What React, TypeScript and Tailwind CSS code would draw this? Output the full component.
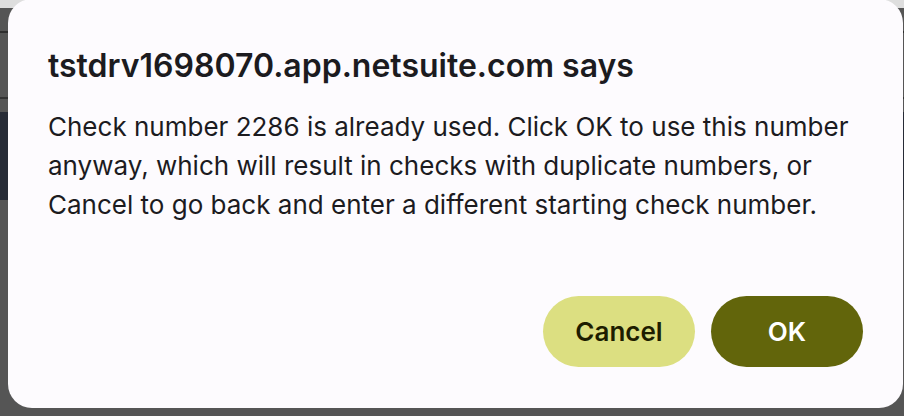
import React from "react";

export default function App() {
  return (
    <div className="relative w-[904px] h-[416px] overflow-hidden bg-[#555555] font-['Inter','Liberation_Sans',sans-serif]">
      {/* page behind the alert */}
      <div className="flex flex-col">
        <div className="h-[8px] bg-[#dedede]" />
        <div className="h-[23px]" />
        <div className="h-[2px] bg-[#2e2e2e]" />
        <div className="h-[64px]" />
        <div className="h-[2px] bg-[#333333]" />
        <div className="h-[13px]" />
        <div className="h-[88px] bg-[#272b36]" />
      </div>

      {/* alert dialog */}
      <div className="absolute left-[8px] top-[-1px] w-[895px] h-[409px] rounded-[24px] bg-[#fdfbfe] flex flex-col px-[40px] pb-[41px] pt-[47px] text-[#1c1b1f]">
        <h1 className="text-[32px] leading-[40px] font-semibold">
          tstdrv1698070.app.netsuite.com says
        </h1>
        <p className="mt-[21px] text-[26px] leading-[39px]">
          Check number 2286 is already used. Click OK to use this number anyway, which will result in checks with duplicate numbers, or Cancel to go back and enter a different starting check number.
        </p>
        <div className="mt-auto flex justify-end gap-[16px]">
          <button className="w-[152px] h-[71px] rounded-full bg-[#dcdf81] text-[#1d1d00] text-[26px] font-semibold">
            Cancel
          </button>
          <button className="w-[152px] h-[71px] rounded-full bg-[#62650b] text-white text-[26px] font-semibold">
            OK
          </button>
        </div>
      </div>
    </div>
  );
}
